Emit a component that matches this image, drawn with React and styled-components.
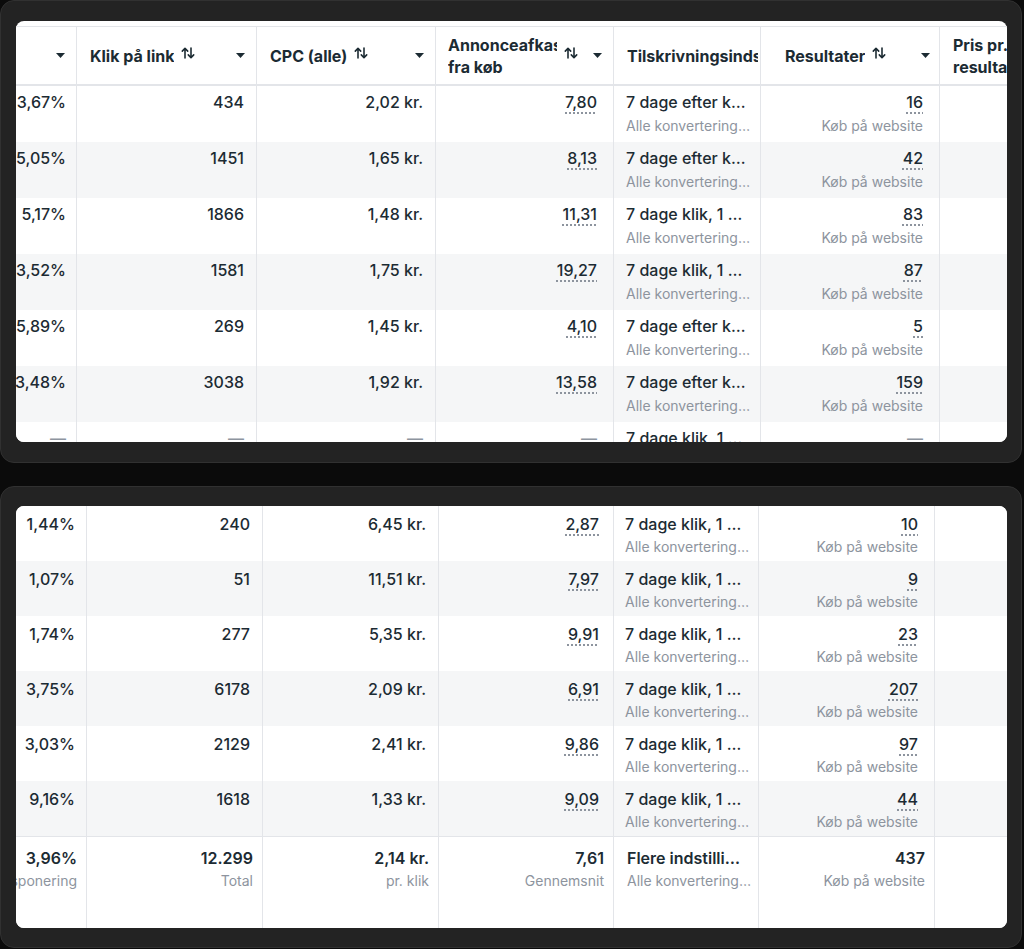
import React from 'react';
import styled, { createGlobalStyle, css } from 'styled-components';

const Global = createGlobalStyle`
  html, body { margin: 0; padding: 0; background: #0b0b0b; }
  body { font-family: Inter, "Noto Sans", "Liberation Sans", sans-serif; -webkit-font-smoothing: antialiased; }
  * { box-sizing: border-box; }
`;

const LINE = '#e3e5e9';
const INK = '#1c2b33';
const MUTED = '#8d949e';

const Page = styled.div`
  display: flex;
  flex-direction: column;
  gap: 23px;
  width: 1024px;
  height: 949px;
  background: #0b0b0b;
`;

const Panel = styled.section`
  width: 1022px;
  background: #232323;
  border: 1px solid #313131;
  border-radius: 14px;
  padding: ${p => p.$py}px 14px ${p => p.$py}px 15px;
`;

const Sheet = styled.div`
  background: #fff;
  border-radius: 8px;
  overflow: hidden;
  height: ${p => p.$h}px;
  padding-top: ${p => p.$top || 0}px;
`;

const Row = styled.div`
  display: grid;
  grid-template-columns: ${p => p.$cols};
  width: max-content;
  height: ${p => p.$h}px;
  background: ${p => (p.$shade ? '#f5f6f7' : '#fff')};
  ${p => p.$rule && css`border-top: 1px solid ${LINE};`}
`;

const HeadRow = styled(Row)`
  border-top: 1px solid ${LINE};
  border-bottom: 2px solid ${LINE};
`;

const HeadCell = styled.div`
  display: flex;
  align-items: center;
  min-width: 0;
  overflow: hidden;
  padding: 0 ${p => p.$pr ?? 11}px 0 ${p => p.$pl ?? 13}px;
  border-right: 1px solid ${LINE};
`;

const HeadLabel = styled.span`
  flex: 0 1 auto;
  min-width: 0;
  overflow: hidden;
  font-size: 16px;
  font-weight: 700;
  line-height: 22px;
  color: ${INK};
  white-space: ${p => (p.$nowrap ? 'nowrap' : 'normal')};
`;

const SortBox = styled.span`
  flex: none;
  display: flex;
  margin-left: 7px;
  transform: translateY(-3px);
`;

const CaretBox = styled.span`
  flex: none;
  display: flex;
  margin-left: auto;
  padding-left: 15px;
`;

const Cell = styled.div`
  display: flex;
  flex-direction: column;
  align-items: ${p => (p.$left ? 'flex-start' : 'flex-end')};
  min-width: 0;
  overflow: hidden;
  white-space: nowrap;
  padding: ${p => p.$pt}px ${p => p.$pr}px 0 ${p => p.$pl}px;
  border-right: 1px solid ${LINE};
`;

const Main = styled.span`
  font-size: 16px;
  line-height: 20px;
  font-weight: ${p => (p.$strong ? 600 : 500)};
  color: ${p => (p.$muted ? MUTED : INK)};
  ${p =>
    p.$dotted &&
    css`
      text-decoration: underline dotted ${MUTED};
      text-decoration-thickness: 1.5px;
      text-underline-offset: 4px;
    `}
`;

const Sub = styled.span`
  font-size: 14px;
  line-height: 20px;
  font-weight: 400;
  color: ${MUTED};
  margin-top: ${p => p.$gap}px;
`;

const SortIcon = () => (
  <svg width="14" height="12" viewBox="0 0 14 12" fill="none" stroke={INK} strokeWidth="1.6" strokeLinecap="round" strokeLinejoin="round">
    <path d="M4 11V1.5M1.3 4.1 4 1.3l2.7 2.8" />
    <path d="M10 1v9.5M7.3 7.9 10 10.7l2.7-2.8" />
  </svg>
);

const Caret = () => (
  <svg width="9" height="5" viewBox="0 0 9 5">
    <path d="M0 0h9L4.5 5z" fill={INK} />
  </svg>
);

const SUB_ATTR = 'Alle konvertering…';
const SUB_RES = 'Køb på website';

const topCfg = {
  cols: [61, 180, 179, 178, 147, 179, 140],
  pr: [10, 12, 12, 16, 0, 16, 0],
  pl: 12,
  h: 56,
  pt: 6,
  gap: 4,
};

const bottomCfg = {
  cols: [71, 176, 176, 175, 145, 176, 140],
  pr: [11, 12, 12, 14, 0, 16, 0],
  pl: 11,
  h: 55,
  pt: 8,
  gap: 3,
};

const topRows = [
  ['3,67%', '434', '2,02 kr.', '7,80', '7 dage efter k…', '16'],
  ['5,05%', '1451', '1,65 kr.', '8,13', '7 dage efter k…', '42'],
  ['5,17%', '1866', '1,48 kr.', '11,31', '7 dage klik, 1 …', '83'],
  ['3,52%', '1581', '1,75 kr.', '19,27', '7 dage klik, 1 …', '87'],
  ['5,89%', '269', '1,45 kr.', '4,10', '7 dage efter k…', '5'],
  ['3,48%', '3038', '1,92 kr.', '13,58', '7 dage efter k…', '159'],
  [null, null, null, null, '7 dage klik, 1 …', null],
];

const bottomRows = [
  ['1,44%', '240', '6,45 kr.', '2,87', '7 dage klik, 1 …', '10'],
  ['1,07%', '51', '11,51 kr.', '7,97', '7 dage klik, 1 …', '9'],
  ['1,74%', '277', '5,35 kr.', '9,91', '7 dage klik, 1 …', '23'],
  ['3,75%', '6178', '2,09 kr.', '6,91', '7 dage klik, 1 …', '207'],
  ['3,03%', '2129', '2,41 kr.', '9,86', '7 dage klik, 1 …', '97'],
  ['9,16%', '1618', '1,33 kr.', '9,09', '7 dage klik, 1 …', '44'],
];

const totals = [
  ['3,96%', 'Pr. eksponering'],
  ['12.299', 'Total'],
  ['2,14 kr.', 'pr. klik'],
  ['7,61', 'Gennemsnit'],
  ['Flere indstilli…', SUB_ATTR],
  ['437', SUB_RES],
];

const headers = [
  { label: null },
  { label: 'Klik på link', sort: true },
  { label: 'CPC (alle)', sort: true },
  { label: 'Annonceafkast fra køb', sort: true, pl: 12 },
  { label: 'Tilskrivningsindstilling', nowrap: true, noCaret: true, pr: 2 },
  { label: 'Resultater', sort: true, pl: 24, pr: 9 },
  { label: 'Pris pr. resultat', sort: true },
];

const colsTemplate = cols => cols.map(c => `${c}px`).join(' ');

function HeaderRow({ cols }) {
  return (
    <HeadRow $cols={colsTemplate(cols)} $h={60}>
      {headers.map((h, i) => (
        <HeadCell key={i} $pl={h.pl} $pr={h.pr}>
          {h.label && <HeadLabel $nowrap={h.nowrap}>{h.label}</HeadLabel>}
          {h.sort && (
            <SortBox>
              <SortIcon />
            </SortBox>
          )}
          {!h.noCaret && (
            <CaretBox>
              <Caret />
            </CaretBox>
          )}
        </HeadCell>
      ))}
    </HeadRow>
  );
}

function DataRow({ cfg, values, shade }) {
  return (
    <Row $cols={colsTemplate(cfg.cols)} $h={cfg.h} $shade={shade}>
      {cfg.cols.map((_, i) => {
        const v = values[i];
        if (i === 6) return <Cell key={i} $pt={cfg.pt} $pr={0} $pl={0} />;
        if (i === 4) {
          return (
            <Cell key={i} $left $pt={cfg.pt} $pr={4} $pl={cfg.pl}>
              <Main>{v}</Main>
              <Sub $gap={cfg.gap}>{SUB_ATTR}</Sub>
            </Cell>
          );
        }
        const dotted = i === 3 || i === 5;
        return (
          <Cell key={i} $pt={cfg.pt} $pr={cfg.pr[i]} $pl={4}>
            {v === null ? <Main $muted>—</Main> : <Main $dotted={dotted}>{v}</Main>}
            {i === 5 && v !== null && <Sub $gap={cfg.gap}>{SUB_RES}</Sub>}
          </Cell>
        );
      })}
    </Row>
  );
}

function TotalRow({ cols }) {
  return (
    <Row $cols={colsTemplate(cols)} $h={92} $rule>
      {cols.map((_, i) => {
        if (i === 6) return <Cell key={i} $pt={11} $pr={0} $pl={0} />;
        const [main, sub] = totals[i];
        const left = i === 4;
        return (
          <Cell key={i} $left={left} $pt={11} $pr={left ? 4 : 9} $pl={left ? 13 : 4}>
            <Main $strong>{main}</Main>
            <Sub $gap={3}>{sub}</Sub>
          </Cell>
        );
      })}
    </Row>
  );
}

export default function App() {
  return (
    <>
      <Global />
      <Page>
        <Panel $py={20}>
          <Sheet $h={421} $top={5}>
            <HeaderRow cols={topCfg.cols} />
            {topRows.map((r, i) => (
              <DataRow key={i} cfg={topCfg} values={r} shade={i % 2 === 1} />
            ))}
          </Sheet>
        </Panel>
        <Panel $py={19}>
          <Sheet $h={422}>
            {bottomRows.map((r, i) => (
              <DataRow key={i} cfg={bottomCfg} values={r} shade={i % 2 === 1} />
            ))}
            <TotalRow cols={bottomCfg.cols} />
          </Sheet>
        </Panel>
      </Page>
    </>
  );
}
